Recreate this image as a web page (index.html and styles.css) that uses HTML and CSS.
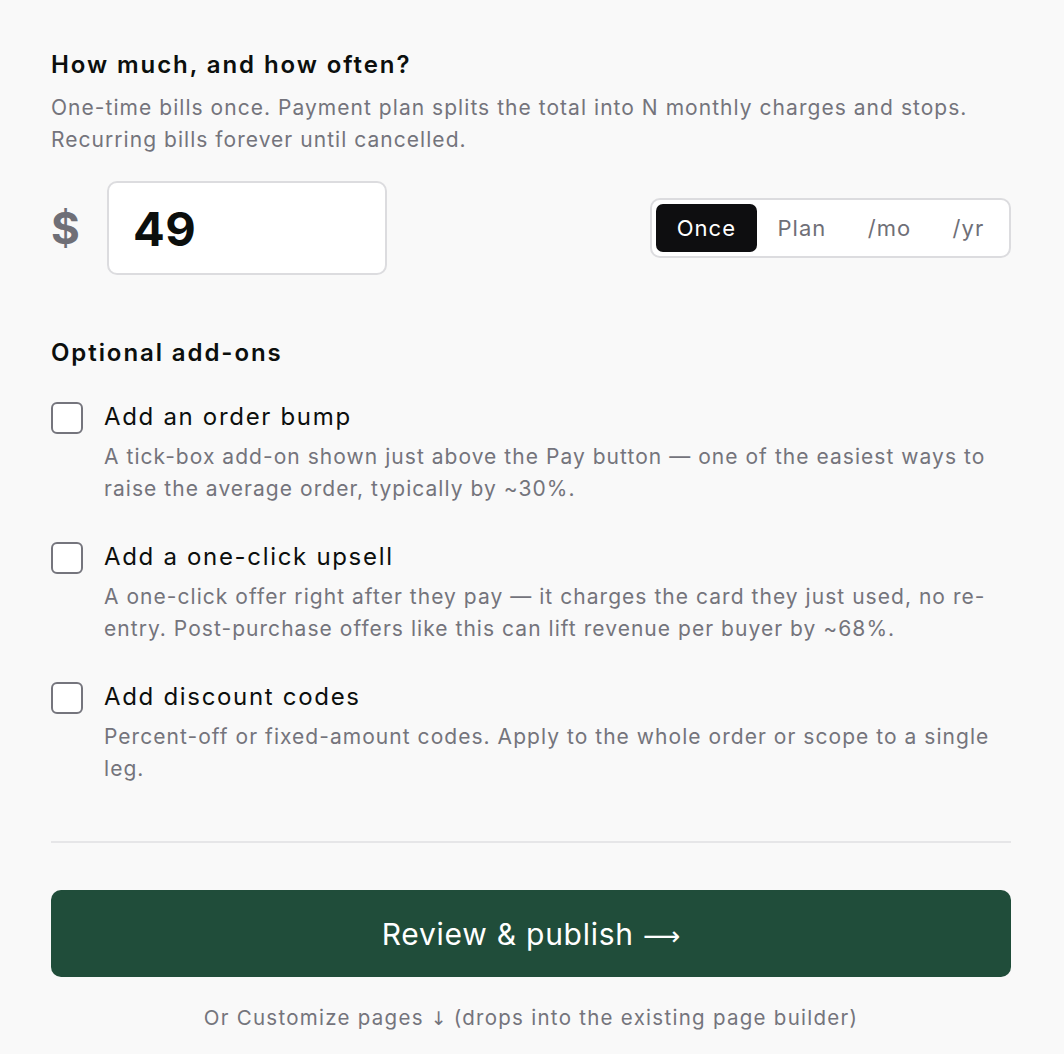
FILE: index.html
```html
<!DOCTYPE html>
<html>
<head>
    <meta charset="utf-8">
    <meta name="viewport" content="width=device-width, initial-scale=1">
    <link rel="stylesheet" href="styles.css">
    <title>Pricing</title>
</head>
<body>
<div class="panel">
    <h2 class="title">How much, and how often?</h2>
    <p class="hint">One-time bills once. Payment plan splits the total into N monthly charges and stops. Recurring bills forever until cancelled.</p>

    <div class="price-row">
        <div class="amount">
            <span class="currency">$</span>
            <div class="amount-box">49</div>
        </div>
        <div class="segments">
            <span class="seg active">Once</span>
            <span class="seg">Plan</span>
            <span class="seg">/mo</span>
            <span class="seg">/yr</span>
        </div>
    </div>

    <h2 class="title addons-title">Optional add-ons</h2>

    <div class="addon">
        <span class="check"></span>
        <div>
            <div class="addon-name">Add an order bump</div>
            <p class="addon-desc">A tick-box add-on shown just above the Pay button — one of the easiest ways to raise the average order, typically by ~30%.</p>
        </div>
    </div>
    <div class="addon">
        <span class="check"></span>
        <div>
            <div class="addon-name">Add a one-click upsell</div>
            <p class="addon-desc">A one-click offer right after they pay — it charges the card they just used, no re-entry. Post-purchase offers like this can lift revenue per buyer by ~68%.</p>
        </div>
    </div>
    <div class="addon">
        <span class="check"></span>
        <div>
            <div class="addon-name">Add discount codes</div>
            <p class="addon-desc">Percent-off or fixed-amount codes. Apply to the whole order or scope to a single leg.</p>
        </div>
    </div>

    <hr class="divider">

    <button class="publish">Review &amp; publish <span class="arrow">⟶</span></button>
    <p class="footnote">Or Customize pages <span class="down">↓</span> (drops into the existing page builder)</p>
</div>
</body>
</html>
```

FILE: styles.css
```css
html, body{
    margin: 0;
    background: #f9f9f9;
}

body{
    font-family: Inter, "Noto Sans", sans-serif;
    color: #0c0f0d;
    letter-spacing: 0.065em;
}

.panel{
    width: 960px;
    padding: 49px 53px 0 51px;
}

.title{
    margin: 0;
    font-size: 24px;
    line-height: 32px;
    font-weight: 600;
    letter-spacing: 0.08em;
}

.hint{
    margin: 11px 0 0;
    font-size: 21px;
    line-height: 32px;
    color: #74747c;
}

.price-row{
    display: flex;
    align-items: center;
    justify-content: space-between;
    margin-top: 25px;
}

.amount{
    display: flex;
    align-items: center;
}

.currency{
    width: 56px;
    font-size: 44px;
    font-weight: 700;
    color: #6f6f77;
    letter-spacing: 0;
}

.amount-box{
    box-sizing: border-box;
    width: 280px;
    height: 94px;
    padding-left: 24px;
    display: flex;
    align-items: center;
    background: #fff;
    border: 2px solid #dcdcdf;
    border-radius: 10px;
    font-size: 47px;
    font-weight: 700;
    letter-spacing: 0.01em;
}

.segments{
    display: flex;
    padding: 4px;
    background: #fff;
    border: 2px solid #dcdcdf;
    border-radius: 10px;
}

.seg{
    padding: 0 20.7px;
    height: 48px;
    line-height: 48px;
    font-size: 22px;
    color: #6f6f77;
    border-radius: 7px;
}

.seg.active{
    background: #0e0e10;
    color: #fff;
}

.addons-title{
    margin-top: 62px;
}

.addon{
    display: flex;
    gap: 21px;
    margin-top: 33px;
}

.addon + .addon{
    margin-top: 37px;
}

.check{
    flex: none;
    box-sizing: border-box;
    width: 32px;
    height: 32px;
    background: #fff;
    border: 2px solid #75757d;
    border-radius: 6px;
}

.addon-name{
    font-size: 24px;
    line-height: 32px;
    margin-top: -1px;
    letter-spacing: 0.07em;
}

.addon-desc{
    margin: 8px 0 0;
    font-size: 21px;
    line-height: 32px;
    color: #74747c;
}

.divider{
    margin: 56px 0 0;
    border: none;
    border-top: 2px solid #e6e6e8;
}

.publish{
    display: block;
    width: 100%;
    height: 87px;
    margin-top: 47px;
    border: none;
    border-radius: 10px;
    background: #204d3a;
    color: #fff;
    font-family: inherit;
    font-size: 30px;
    letter-spacing: 0.025em;
}

.arrow{
    font-family: "DejaVu Sans", sans-serif;
    font-size: 26px;
    letter-spacing: 0;
}

.down{
    font-family: "DejaVu Sans", sans-serif;
    font-size: 19px;
    letter-spacing: 0;
}

.footnote{
    margin: 26px 0 0;
    text-align: center;
    font-size: 20.5px;
    line-height: 30px;
    color: #74747c;
    letter-spacing: 0.062em;
}
```
